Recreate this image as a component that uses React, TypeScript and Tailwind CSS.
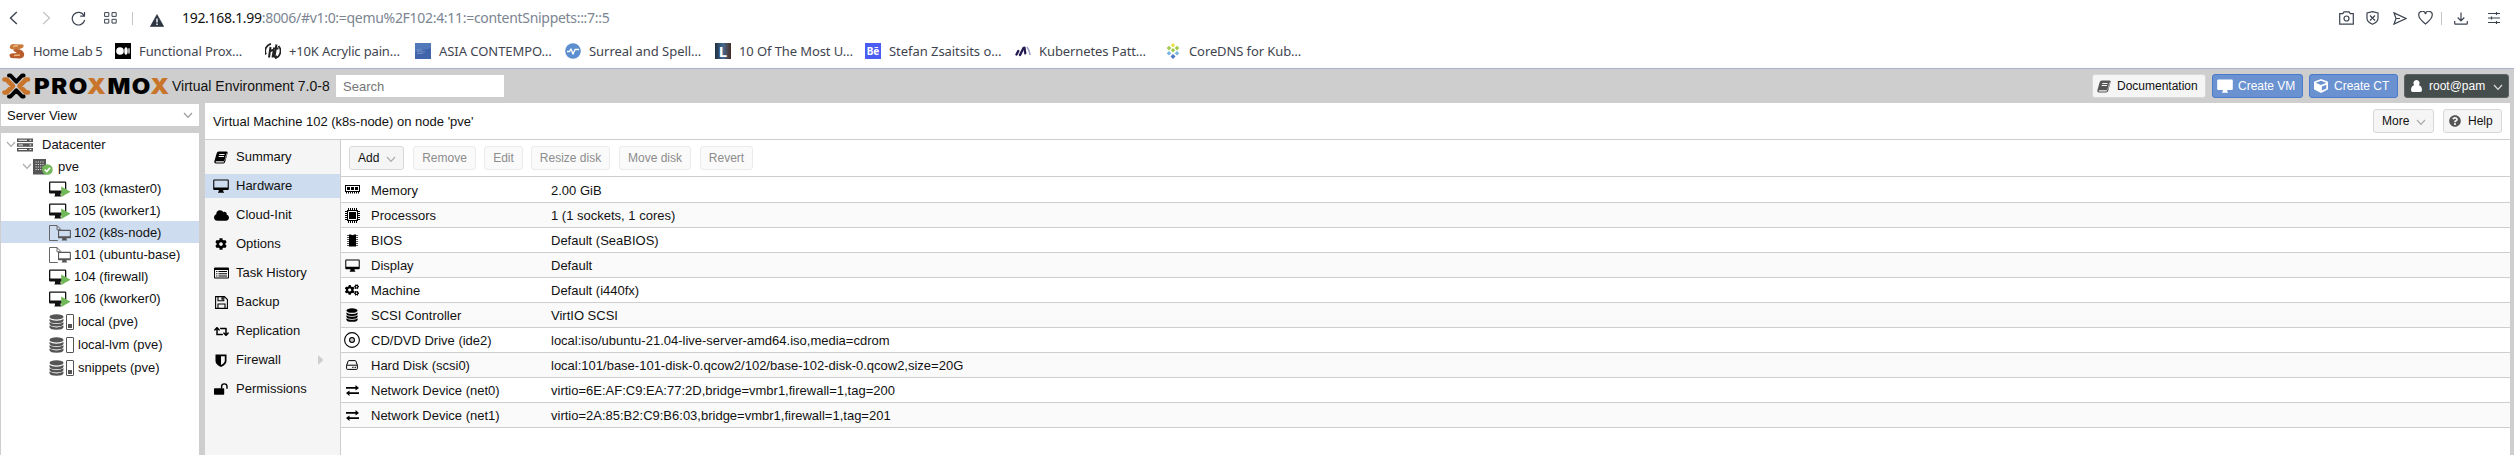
import React from 'react';
import { FaCloud, FaCog, FaCogs, FaQuestionCircle, FaCube, FaRetweet } from 'react-icons/fa';

type IconProps = { className?: string };

function Svg({ w = 16, h = 16, children, className = '' }: { w?: number; h?: number; children: React.ReactNode; className?: string }) {
  return (
    <svg width={w} height={h} viewBox={`0 0 ${w} ${h}`} className={`shrink-0 ${className}`} fill="currentColor">
      {children}
    </svg>
  );
}

const Book = ({ className }: IconProps) => (
  <Svg w={14} h={13} className={className}>
    <path fillRule="evenodd" d="M4.6 0.5H12.6Q14 0.7 13.6 2L11.2 10.8Q10.8 12.6 9.2 12.6H2Q0 12.4 0.3 10.4L2.6 2.6Q3.2 0.7 4.6 0.5ZM5.4 3.1L5.1 4H10.4L10.7 3.1ZM4.8 5.1L4.5 6H9.8L10.1 5.1ZM1.8 10.2Q1.4 11.4 2.4 11.4H9Q10 11.4 10.3 10.2L12.4 2.6L12.9 2.8L10.9 9.4Q10.6 10.2 9.6 10.2Z" />
  </Svg>
);

const Desktop = ({ className }: IconProps) => (
  <Svg w={16} h={14} className={className}>
    <path fillRule="evenodd" d="M1.2 0.5H14.8Q15.8 0.5 15.8 1.6V9.9Q15.8 11 14.8 11H10.2V12.2L11 13.2V13.7H5V13.2L5.8 12.2V11H1.2Q0.2 11 0.2 9.9V1.6Q0.2 0.5 1.2 0.5ZM1.3 1.6V8.4H14.7V1.6Z" />
  </Svg>
);

const DesktopSolid = () => (
  <Svg w={16} h={14}>
    <path fillRule="evenodd" d="M1.2 0.5H14.8Q15.8 0.5 15.8 1.6V9.9Q15.8 11 14.8 11H10.2V12.2L11 13.2V13.7H5V13.2L5.8 12.2V11H1.2Q0.2 11 0.2 9.9V1.6Q0.2 0.5 1.2 0.5Z" />
    <path d="M1.2 1.6h13.6v7H1.2z" fill="#fff" />
  </Svg>
);

const ListIcon = () => (
  <Svg w={15} h={12}>
    <path fillRule="evenodd" d="M1 0.5H14Q15 0.5 15 1.5V10.5Q15 11.5 14 11.5H1Q0 11.5 0 10.5V1.5Q0 0.5 1 0.5ZM1 3V10.5H14V3Z" />
    <path d="M2.200 4H3.400V5H2.200ZM4.500 4H13V5H4.500ZM2.200 6.200H3.400V7.200H2.200ZM4.500 6.200H13V7.200H4.500ZM2.200 8.400H3.400V9.400H2.200ZM4.500 8.400H13V9.400H4.500Z" />
  </Svg>
);

const Floppy = () => (
  <Svg w={13} h={13}>
    <path d="M0.6 0.6H9.4L12.4 3.6V12.4H0.6ZM3 0.6V4.8H8.8V0.6M3 12.4V8H10V12.4" fill="none" stroke="currentColor" strokeWidth="1.1" />
    <path d="M6.4 1.2h1.5v2.6H6.4z" />
  </Svg>
);

const Shield = () => (
  <Svg w={12} h={13}>
    <path fillRule="evenodd" d="M0.5 0.5H11.5V7Q11.5 10.5 6 13Q0.5 10.5 0.5 7ZM6 2.2V11Q9.8 9 9.8 6.8V2.2Z" />
  </Svg>
);

const Unlock = () => (
  <Svg w={14} h={12}>
    <path d="M0.8 5.2h8.6q.8 0 .8.8v5q0 .8-.8.8H.8q-.8 0-.8-.8V6q0-.8.8-.8z" />
    <path d="M7.6 5.6V3.6a2.7 2.7 0 0 1 5.4 0V5.8" fill="none" stroke="currentColor" strokeWidth="1.4" />
  </Svg>
);

const Memory = () => (
  <Svg w={15} h={9}>
    <path fillRule="evenodd" d="M0 0H15V7H0ZM1 1V6H14V1Z" />
    <path d="M2 2H5V5H2ZM6 2H9V5H6ZM10 2H13V5H10ZM1 7H2V8.500H1ZM3 7H4V8.500H3ZM5 7H6V8.500H5ZM7 7H8V8.500H7ZM9 7H10V8.500H9ZM11 7H12V8.500H11ZM13 7H14V8.500H13Z" />
  </Svg>
);

const Cpu = () => (
  <Svg w={15} h={15}>
    <path d="M3.5 0V15M5.5 0V15M7.5 0V15M9.5 0V15M11.5 0V15M0 3.5H15M0 5.5H15M0 7.5H15M0 9.5H15M0 11.5H15" stroke="currentColor" strokeWidth="1" />
    <path d="M2 2h11v11H2z" />
    <path d="M3.5 3.5h8v8h-8z" fill="none" stroke="#fff" />
  </Svg>
);

const Chip = () => (
  <Svg w={11} h={13}>
    <path d="M0 1.5H11M0 3.5H11M0 5.5H11M0 7.5H11M0 9.5H11M0 11.5H11" stroke="currentColor" strokeWidth="1" opacity="0.65" />
    <path d="M2 0.5h2l1 .8h1l1-.8h2v12H2z" />
  </Svg>
);

const databasePath =
  'M.5 5Q3 6.8 7.5 6.8T14.5 5v1.7Q14 9.2 7.5 9.2T.5 6.7zM.5 8.3Q3 10.1 7.5 10.1T14.5 8.3V10Q14 12.5 7.5 12.5T.5 10zM.5 11.6Q3 13.4 7.5 13.4T14.5 11.6v1.7Q14 15.8 7.5 15.8T.5 13.3z';

const Database = () => (
  <Svg w={15} h={16}>
    <ellipse cx="7.5" cy="2.9" rx="7" ry="2.6" />
    <path d={databasePath} />
  </Svg>
);

const DatabaseSmall = () => (
  <svg width="12" height="14" viewBox="0 0 15 16" preserveAspectRatio="none" fill="currentColor">
    <ellipse cx="7.5" cy="2.9" rx="7" ry="2.6" />
    <path d={databasePath} />
  </svg>
);

const Disc = () => (
  <Svg w={16} h={16}>
    <circle cx="8" cy="8" r="7.4" fill="none" stroke="currentColor" strokeWidth="1.1" />
    <circle cx="8" cy="8" r="2.4" fill="none" stroke="currentColor" strokeWidth="1.2" />
    <circle cx="8" cy="8" r="0.6" />
  </Svg>
);

const Hdd = () => (
  <Svg w={12} h={10}>
    <path d="M.6 5.3L2.2 1Q2.4.6 2.9.6H9.1Q9.6.6 9.8 1L11.4 5.3V8.6Q11.4 9.4 10.6 9.4H1.4Q.6 9.4.6 8.6ZM.6 5.2H11.4" fill="none" stroke="currentColor" />
    <path d="M6.3 6.8h1.2V8H6.3zM8.6 6.8h1.2V8H8.6z" />
  </Svg>
);

const Exchange = () => (
  <Svg w={13} h={11}>
    <path d="M0 2h9.5V0L13 2.900 9.500 5.600V3.800H0zM13 7.200H3.500V5.400L0 8.100l3.500 2.800V9H13z" />
  </Svg>
);

const User = () => (
  <Svg w={11} h={12}>
    <path d="M5.5 0a3 3.2 0 0 1 2.3 5.3Q10.9 6 11 10.2 11 12 9.2 12H1.8Q0 12 0 10.2.1 6 3.2 5.3A3 3.2 0 0 1 5.5 0z" />
  </Svg>
);

const Chevron = ({ className = '' }: IconProps) => (
  <svg width="10" height="7" viewBox="0 0 10 7" className={`shrink-0 ${className}`}>
    <path d="M1 1l4 4.3L9 1" fill="none" stroke="currentColor" strokeWidth="1.2" />
  </svg>
);

const ServerIcon = () => (
  <Svg w={16} h={14} className="text-[#555]">
    <path fillRule="evenodd" d="M0 .5H16V4H0ZM1.5 1.7V2.7H10V1.7ZM0 5.2H16V8.7H0ZM1.5 6.4V7.4H6V6.4ZM0 9.9H16V13.4H0ZM1.5 11.1V12.1H10V11.1Z" />
    <path d="M12.500 1.700h1.800v1h-1.800zM12.500 6.400h1.800v1h-1.800zM12.500 11.100h1.800v1h-1.800z" fill="#fff" />
  </Svg>
);

const NodeIcon = () => (
  <Svg w={20} h={17} className="text-[#555]">
    <path d="M0 0h13v15.500H0z" />
    <path d="M2.500 3h8.500M2.500 5.500h8.500M2.500 8h8.500M2.500 10.500h8.500" stroke="#ddd" strokeWidth="1.2" strokeDasharray="1.2 1.1" />
    <circle cx="14.4" cy="10.5" r="5.3" fill="#72b859" />
    <path d="M11.800 10.600l2 2 3.300-3.900" fill="none" stroke="#fff" strokeWidth="1.7" />
  </Svg>
);

const RunningVm = () => (
  <Svg w={22} h={17} className="mt-[2px]">
    <path fillRule="evenodd" d="M1.2 .5H16Q17.3 .5 17.3 1.7V11.5Q17.3 12.5 16 12.5H11.5V14L12.3 15.5H5.3L6 14V12.5H1.2Q0 12.5 0 11.5V1.7Q0 .5 1.2 .5ZM1.3 1.8V9.5H16V1.8Z" />
    <path d="M12.200 5.500V15.900L21.600 10.700Z" fill="#72b859" />
  </Svg>
);

const TemplateVm = () => (
  <Svg w={22} h={17} className="mt-[2px] text-[#555]">
    <path d="M8.800 15.500H.5V.5H8l4 4M8 .5V4.800h3.500" fill="none" stroke="#666" />
    <path fillRule="evenodd" d="M9.5 4.8H21Q21.9 4.8 21.9 5.7V12.4Q21.9 13.3 21 13.3H17.5V14.3L18.3 15.6H12.5L13.3 14.3V13.3H9.9Q9 13.3 9 12.4V5.7Q9 4.8 9.5 4.8ZM10.1 6V11.2H20.8V6Z" />
  </Svg>
);

const StorageIcon = ({ used }: { used: boolean }) => (
  <span className="flex w-[26px] shrink-0 items-center gap-[2px] text-[#555]">
    <Database />
    <span className="flex h-[16px] w-[8px] items-end rounded-[1px] border border-[#555] px-px pb-px">
      {used && <span className="h-[4px] w-full bg-[#555]" />}
    </span>
  </span>
);

type TreeRow = { label: string; kind: 'vm' | 'tpl' | 'used' | 'empty'; selected?: boolean };
const guests: TreeRow[] = [
  { label: '103 (kmaster0)', kind: 'vm' },
  { label: '105 (kworker1)', kind: 'vm' },
  { label: '102 (k8s-node)', kind: 'tpl', selected: true },
  { label: '101 (ubuntu-base)', kind: 'tpl' },
  { label: '104 (firewall)', kind: 'vm' },
  { label: '106 (kworker0)', kind: 'vm' },
];
const storages: TreeRow[] = [
  { label: 'local (pve)', kind: 'used' },
  { label: 'local-lvm (pve)', kind: 'empty' },
  { label: 'snippets (pve)', kind: 'used' },
];

const menu: { label: string; icon: React.ReactNode; arrow?: boolean }[] = [
  { label: 'Summary', icon: <Book /> },
  { label: 'Hardware', icon: <Desktop /> },
  { label: 'Cloud-Init', icon: <FaCloud size={15} /> },
  { label: 'Options', icon: <FaCog size={12} /> },
  { label: 'Task History', icon: <ListIcon /> },
  { label: 'Backup', icon: <Floppy /> },
  { label: 'Replication', icon: <FaRetweet size={15} /> },
  { label: 'Firewall', icon: <Shield />, arrow: true },
  { label: 'Permissions', icon: <Unlock /> },
];

const hardware: [React.ReactNode, string, string][] = [
  [<Memory />, 'Memory', '2.00 GiB'],
  [<Cpu />, 'Processors', '1 (1 sockets, 1 cores)'],
  [<Chip />, 'BIOS', 'Default (SeaBIOS)'],
  [<Desktop className="h-[13px] w-[15px]" />, 'Display', 'Default'],
  [<FaCogs size={14} />, 'Machine', 'Default (i440fx)'],
  [<DatabaseSmall />, 'SCSI Controller', 'VirtIO SCSI'],
  [<Disc />, 'CD/DVD Drive (ide2)', 'local:iso/ubuntu-21.04-live-server-amd64.iso,media=cdrom'],
  [<Hdd />, 'Hard Disk (scsi0)', 'local:101/base-101-disk-0.qcow2/102/base-102-disk-0.qcow2,size=20G'],
  [<Exchange />, 'Network Device (net0)', 'virtio=6E:AF:C9:EA:77:2D,bridge=vmbr1,firewall=1,tag=200'],
  [<Exchange />, 'Network Device (net1)', 'virtio=2A:85:B2:C9:B6:03,bridge=vmbr1,firewall=1,tag=201'],
];

const bookmarks: { label: string; icon: React.ReactNode; width: string; track: string }[] = [
  {
    label: 'Home Lab 5', width: 'w-[106px]', track: 'tracking-[-0.4px]',
    icon: (
      <Svg>
        <path d="M1 3Q2 .5 6 1.200L14 1.500Q16 4 12 5.500L7 7.200 2 6Q0 5 1 3z" fill="#c87838" />
        <path d="M4 7.500Q9 5 13 7.500L15 10Q16 15 11 15.500L2 15Q-1 12 2 10.500L8 10z" fill="#b95c2c" />
        <path d="M4 3.500l5-1M5 12.500l6-.5" stroke="#eab77c" strokeWidth="1.5" />
      </Svg>
    ),
  },
  {
    label: 'Functional Prox…', width: 'w-[150px]', track: 'tracking-[-0.1px]',
    icon: (
      <Svg>
        <path d="M0 0h16v16H0z" fill="#000" />
        <circle cx="5" cy="8" r="3.8" fill="#fff" /><ellipse cx="11" cy="8" rx="1.7" ry="3.7" fill="#fff" /><ellipse cx="14" cy="8" rx=".7" ry="3.3" fill="#fff" />
      </Svg>
    ),
  },
  {
    label: '+10K Acrylic pain…', width: 'w-[150px]', track: 'tracking-[-0.15px]',
    icon: (
      <Svg className="text-[#222]">
        <path d="M6 .8A7.500 7.500 0 0 0 1 11.500M10 15.300A7.500 7.500 0 0 0 13.500 3" fill="none" stroke="currentColor" strokeWidth="1.8" />
        <path d="M5.500 4L4 14.500M4.500 9Q9 5 8.500 9L7.500 14.500M11.500 1.500L9.500 13q0 2 2.500 0M8 5.500h5.500" fill="none" stroke="currentColor" strokeWidth="2" />
      </Svg>
    ),
  },
  {
    label: 'ASIA CONTEMPO…', width: 'w-[150px]', track: 'tracking-[-0.05px]',
    icon: (
      <Svg>
        <path d="M0 0h16v16H0z" fill="#4165ab" /><path d="M0 0h16v5L0 9z" fill="#5178b8" />
        <path d="M2 7h5M2 8.800h8M2 10.500h6" stroke="#8fa7d4" strokeWidth=".6" />
      </Svg>
    ),
  },
  {
    label: 'Surreal and Spell…', width: 'w-[150px]', track: 'tracking-[-0.05px]',
    icon: (
      <Svg>
        <circle cx="8" cy="8" r="7.8" fill="#5c8fd0" />
        <path d="M2 8.500h2.500l1.500-2.500 2 5 2-4.500h4" fill="none" stroke="#fff" strokeWidth="1.4" strokeLinejoin="round" />
      </Svg>
    ),
  },
  {
    label: '10 Of The Most U…', width: 'w-[150px]', track: 'tracking-[-0.1px]',
    icon: (
      <span className="flex h-4 w-4 items-center justify-center bg-gradient-to-r from-[#203040] via-[#416b92] to-[#472c24] text-[15px] font-bold leading-none text-white">L</span>
    ),
  },
  {
    label: 'Stefan Zsaitsits o…', width: 'w-[150px]', track: 'tracking-[-0.05px]',
    icon: (
      <span className="flex h-4 w-4 items-center justify-center bg-[#4a5cf2] text-[10px] font-bold leading-none text-white">Bē</span>
    ),
  },
  {
    label: 'Kubernetes Patt…', width: 'w-[150px]', track: 'tracking-[-0.1px]',
    icon: (
      <Svg>
        <path d="M1.500 11.500l1.800-3.500M5 12L8.500 5" stroke="#241b52" strokeWidth="2.4" strokeLinecap="round" />
        <path d="M9.500 4.500l.8 6" stroke="#241b52" strokeWidth="2.2" strokeLinecap="round" />
        <path d="M12 4q2.500 3 3 8" stroke="#9a9ec9" strokeWidth="1.6" fill="none" />
      </Svg>
    ),
  },
  {
    label: 'CoreDNS for Kub…', width: 'w-[150px]', track: 'tracking-[-0.1px]',
    icon: (
      <Svg>
        <path d="M8 0l2.200 2.200L8 4.400 5.800 2.200z" fill="#e6e24a" />
        <path d="M4 2.800l2.300 2.300L4 7.400 1.700 5.100zM12 2.800l2.300 2.300L12 7.400 9.700 5.100zM8 5l2.300 2.300L8 9.600 5.700 7.300z" fill="#a4cb4c" />
        <path d="M4 8l2.300 2.300L4 12.600l-2.300-2.300zM12 8l2.300 2.300-2.300 2.300-2.300-2.300z" fill="#79b7e2" />
        <path d="M8 11l2.500 2.500L8 16l-2.500-2.500z" fill="#4b79c6" />
      </Svg>
    ),
  },
];

const line = { fill: 'none', stroke: 'currentColor', strokeWidth: 1.2 } as const;

function BrowserBar() {
  return (
    <div className="flex h-[36px] items-center text-[#3c4450]">
      <div className="flex w-[182px] shrink-0 items-center pl-[9px]">
        <Svg w={9} h={14} className="mr-[24px]"><path d="M7.800 1L1.500 7l6.300 6" {...line} strokeWidth={1.4} /></Svg>
        <Svg w={9} h={14} className="mr-[20px] text-[#c4c6ca]"><path d="M1.200 1l6.300 6-6.300 6" {...line} strokeWidth={1.4} /></Svg>
        <Svg w={15} h={15} className="mr-[18px]"><path d="M13 4.500A6.300 6.300 0 1 0 13.700 9M13.500 1v4.200H9.200" {...line} /></Svg>
        <Svg w={13} h={12} className="mr-[15px]"><path d="M.6.6h4.200v3.800H.6zM8 .6h4.200v3.800H8zM.6 7.300h4.200v3.800H.6zM8 7.300h4.200v3.800H8z" {...line} strokeWidth={1} /></Svg>
        <span className="mr-[17px] h-[13px] w-px bg-[#c4c6ca]" />
        <Svg w={14} h={13} className="mt-[4px] text-[#2b3440]">
          <path d="M7 .5L13.700 12.500H.3z" stroke="currentColor" strokeWidth=".6" strokeLinejoin="round" />
          <path d="M6.300 4.500h1.400v4H6.300zM6.300 9.600h1.400V11H6.300z" fill="#fff" />
        </Svg>
      </div>
      <div className="flex-1 whitespace-nowrap pb-px font-['Noto_Sans',sans-serif] text-[14px] tracking-[-0.3px] text-[#7b8592]">
        <span className="text-[#111]">192.168.1.99</span>:8006/#v1:0:=qemu%2F102:4:11:=contentSnippets:::7::5
      </div>
      <div className="flex items-center pr-[14px]">
        <Svg w={15} h={14} className="mr-[12px]"><path d="M.7 2.700h3L5 .8h5l1.300 1.900h3v10.500H.7z" {...line} /><circle cx="7.5" cy="7.5" r="2.5" {...line} /></Svg>
        <Svg w={13} h={14} className="mr-[14px]"><path d="M6.500.7L12 2v5.500q0 3.500-5.500 5.800Q1 11 1 7.500V2zM4 4.500l5 5M9 4.500l-5 5" {...line} /></Svg>
        <Svg w={14} h={13} className="mr-[11px]"><path d="M1 .9L13 6.500 1 12.100 3 6.500zM3 6.500h4" {...line} /></Svg>
        <Svg w={15} h={14} className="mr-[8px]"><path d="M7.500 12.900Q.8 7.800.8 4.300A3.400 3.400 0 0 1 7.500 3.100 3.400 3.400 0 0 1 14.200 4.300Q14.200 7.800 7.500 12.900z" {...line} /></Svg>
        <span className="mr-[12px] h-[13px] w-px bg-[#c4c6ca]" />
        <Svg w={14} h={13} className="mr-[20px]"><path d="M7 .5v8M3.700 5.500L7 8.800l3.300-3.300M.7 9v2.500q0 .7.700.7h11.200q.7 0 .7-.7V9" {...line} /></Svg>
        <Svg w={12} h={12}><path d="M0 1.500h12M0 6h12M0 10.500h12M8.500 0v3M3.500 4.500v3M8.500 9v3" {...line} /></Svg>
      </div>
    </div>
  );
}

function Header() {
  return (
    <div className="flex h-[35px] shrink-0 items-center border-t border-[#a9b5cc] bg-[#cecece]">
      <Svg w={32} h={26} className="ml-px">
        <path d="M3.500 6.500h2L12 13l-6.500 6.500h-2M27 6.500h-2L18.500 13l6.500 6.500h2" fill="none" stroke="#c8742b" strokeWidth="4.6" strokeLinejoin="round" strokeLinecap="round" />
        <path d="M8 2.500h1.500l5.800 6.200 5.800-6.200h1.500M8 23.500h1.500l5.800-6.200 5.800 6.200h1.500" fill="none" stroke="#000" strokeWidth="4" strokeLinejoin="round" strokeLinecap="round" />
      </Svg>
      <div className="w-[138px] shrink-0 pl-px">
        <div className="w-[118px] origin-left scale-x-[1.14] whitespace-nowrap font-['Inter',sans-serif] text-[21px] font-black leading-none tracking-[1.3px] text-black">
          PRO<span className="text-[#c8742b]">X</span>MO<span className="text-[#c8742b]">X</span>
        </div>
      </div>
      <div className="w-[165px] shrink-0 whitespace-nowrap pl-px text-[14px]">Virtual Environment 7.0-8</div>
      <div className="flex h-[22px] w-[168px] items-center bg-white pl-[7px] text-[13px] text-[#757575]">Search</div>
      <div className="ml-auto flex items-center gap-[6px] pr-[5px] text-[12px]">
        <div className="flex h-[24px] w-[114px] items-center whitespace-nowrap rounded-[3px] border border-[#d8d8d8] bg-[#f5f5f5] pl-[4px]"><Book className="mr-[6px] text-[#555]" />Documentation</div>
        <div className="flex h-[24px] w-[91px] items-center gap-[5px] whitespace-nowrap rounded-[3px] border border-[#4a7ac9] bg-[#6a91d0] pl-[4px] text-white"><DesktopSolid />Create VM</div>
        <div className="flex h-[24px] w-[89px] items-center gap-[6px] whitespace-nowrap rounded-[3px] border border-[#4a7ac9] bg-[#6a91d0] pl-[4px] text-white"><FaCube size={14} />Create CT</div>
        <div className="flex h-[24px] w-[105px] items-center whitespace-nowrap rounded-[3px] border border-[#5d6363] bg-[#464d4d] pl-[6px] text-white"><User /><span className="ml-[7px] mr-[8px]">root@pam</span><Chevron className="mt-[2px] text-[#ddd]" /></div>
      </div>
    </div>
  );
}

function Sidebar() {
  return (
    <div className="flex w-[199px] shrink-0 flex-col border-l border-[#cecece]">
      <div className="mt-px flex h-[22px] items-center justify-between bg-white pl-[6px] pr-[6px]">Server View<Chevron className="text-[#999]" /></div>
      <div className="mt-[7px] flex-1 bg-white">
        <div className="flex h-[22px] items-center pl-[5px] pt-px"><Chevron className="text-[#aaa]" /><span className="ml-px flex w-[25px]"><ServerIcon /></span>Datacenter</div>
        <div className="flex h-[22px] items-center pl-[21px] pt-px"><Chevron className="text-[#aaa]" /><span className="ml-px flex w-[25px] pt-[2px]"><NodeIcon /></span>pve</div>
        {guests.map((r) => (
          <div key={r.label} className={`flex h-[22px] items-center gap-[3px] pl-[48px] pt-px ${r.selected ? 'bg-[#cddcef]' : ''}`}>
            {r.kind === 'vm' ? <RunningVm /> : <TemplateVm />}{r.label}
          </div>
        ))}
        {storages.map((r) => (
          <div key={r.label} className="flex h-[23px] items-center gap-[3px] pl-[48px] pt-[2px]">
            <StorageIcon used={r.kind === 'used'} />{r.label}
          </div>
        ))}
      </div>
    </div>
  );
}

const disabledButtons: [string, string][] = [
  ['Remove', 'w-[63px] ml-[9px]'],
  ['Edit', 'w-[39px] ml-[8px]'],
  ['Resize disk', 'w-[79px] ml-[8px]'],
  ['Move disk', 'w-[72px] ml-[9px]'],
  ['Revert', 'w-[53px] ml-[9px]'],
];

function Content() {
  return (
    <div className="flex min-w-0 flex-1 flex-col bg-white">
      <div className="flex h-[37px] shrink-0 items-center border-b border-[#cecece] pl-[8px] pr-[8px]">
        <span className="pt-px">Virtual Machine 102 (k8s-node) on node 'pve'</span>
        <div className="ml-auto flex gap-[9px] text-[12px]">
          <div className="flex h-[24px] w-[61px] items-center gap-[7px] rounded-[3px] border border-[#d8d8d8] bg-[#f5f5f5] pl-[8px]">More<Chevron className="mt-[2px] text-[#aaa]" /></div>
          <div className="flex h-[24px] w-[59px] items-center gap-[7px] rounded-[3px] border border-[#d8d8d8] bg-[#f5f5f5] pl-[5px]"><FaQuestionCircle size={12} className="text-[#555]" />Help</div>
        </div>
      </div>
      <div className="flex min-h-0 flex-1">
        <div className="flex w-[136px] shrink-0 flex-col gap-[5px] border-r border-[#cecece] bg-[#f5f5f5] pt-[5px]">
          {menu.map((m) => (
            <div key={m.label} className={`flex h-[24px] shrink-0 items-center pl-[8px] ${m.label === 'Hardware' ? 'bg-[#cddcef]' : ''}`}>
              <span className="mr-[7px] flex w-[16px] justify-center text-black">{m.icon}</span>
              <span className="pb-px">{m.label}</span>
              {m.arrow && <svg width="6" height="10" className="ml-auto mr-[16px]"><path d="M0 0l5.500 5L0 10z" fill="#cfcfcf" /></svg>}
            </div>
          ))}
        </div>
        <div className="min-w-0 flex-1">
          <div className="flex h-[37px] items-center border-b border-[#cecece] pl-[8px] text-[12px]">
            <div className="flex h-[24px] w-[55px] items-center gap-[7px] rounded-[3px] border border-[#d8d8d8] bg-[#f5f5f5] pl-[8px]">Add<Chevron className="mt-[2px] text-[#aaa]" /></div>
            {disabledButtons.map(([label, cls]) => (
              <div key={label} className={`flex h-[24px] items-center justify-center whitespace-nowrap rounded-[3px] border border-[#ebebeb] bg-[#fafafa] text-[#8c8c8c] ${cls}`}>{label}</div>
            ))}
          </div>
          {hardware.map(([icon, name, value], i) => (
            <div key={name} className={`flex items-center border-b border-[#cecece] ${i === 0 ? 'h-[26px]' : 'h-[25px]'} ${i % 2 ? 'bg-[#fafafa]' : 'bg-white'}`}>
              <span className="flex w-[22px] shrink-0 justify-center text-black">{icon}</span>
              <span className={`ml-[8px] w-[180px] shrink-0 ${i === 0 ? 'pt-[2px]' : 'pt-px'}`}>{name}</span>
              <span className={i === 0 ? 'pt-[2px]' : 'pt-px'}>{value}</span>
            </div>
          ))}
        </div>
      </div>
    </div>
  );
}

export default function App() {
  return (
    <div className="flex h-[455px] w-[2514px] flex-col overflow-hidden bg-white font-['Liberation_Sans',Arial,sans-serif] text-[13px] leading-[17px] text-[#111]">
      <BrowserBar />
      <div className="flex h-[32px] shrink-0 items-center pb-[2px] pl-[9px] font-['Noto_Sans',sans-serif] text-[13px] text-[#3f4550]">
        {bookmarks.map((b) => (
          <div key={b.label} className={`flex shrink-0 items-center gap-[8px] whitespace-nowrap ${b.width}`}>
            {b.icon}<span className={b.track}>{b.label}</span>
          </div>
        ))}
      </div>
      <Header />
      <div className="flex min-h-0 flex-1 gap-[6px] bg-[#cecece] pr-[4px]">
        <Sidebar />
        <Content />
      </div>
    </div>
  );
}
